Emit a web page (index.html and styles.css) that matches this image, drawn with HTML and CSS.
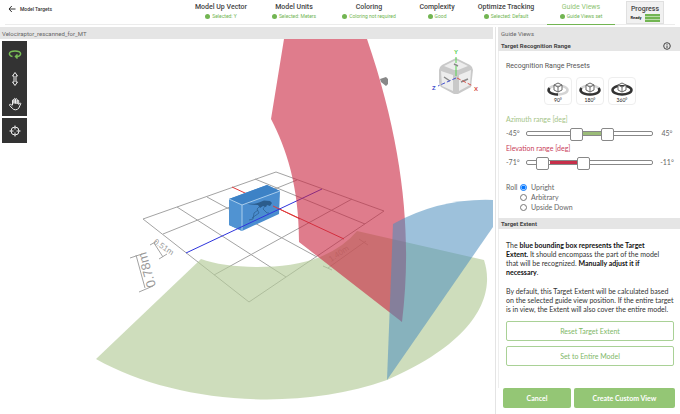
FILE: index.html
```html
<!DOCTYPE html>
<html lang="en">
<head>
<meta charset="utf-8">
<title>Guide Views</title>
<link rel="stylesheet" href="styles.css">
</head>
<body>
<header class="topbar">
  <a class="back" href="#"><svg viewBox="0 0 8 8"><path d="M7.5 4H1M3.8 1 1 4l2.8 3"/></svg>Model Targets</a>
  <nav class="steps">
    <a class="step" href="#"><b>Model Up Vector</b><span>Selected: Y</span></a>
    <a class="step" href="#"><b>Model Units</b><span>Selected: Meters</span></a>
    <a class="step" href="#"><b>Coloring</b><span>Coloring not required</span></a>
    <a class="step" href="#"><b>Complexity</b><span>Good</span></a>
    <a class="step" href="#"><b>Optimize Tracking</b><span>Selected: Default</span></a>
    <a class="step active" href="#"><b>Guide Views</b><span>Guide Views set</span></a>
  </nav>
  <div class="progress"><b>Progress</b><div class="ready"><span>Ready</span><i class="bars"></i></div></div>
</header>
<main class="workspace">
  <section class="viewport">
    <h1 class="bar">Velociraptor_rescanned_for_MT</h1>
    <div class="stage">
      <svg class="scene" viewBox="0 39 493 375" preserveAspectRatio="xMinYMin slice" role="img" aria-label="Model preview">
        <g class="grid">
          <path d="M143 219 276 172 384 211 249 302ZM163 234 297 180M214 275 352 199M177 207 286 277M207 197 317 257M255 179 365 224"/>
          <path d="M130 258 142 254M136 255 145 288M139 292 153 286M150 245 157 241M154 243 163 257M159 259 167 254M328 268 366 241M323 266 332 270M359 239 368 245"/>
        </g>
        <path class="axis-x" d="M232 187 344 239"/>
        <text class="dim" font-size="13" transform="translate(156 286) rotate(-106)">0.78m</text>
        <text class="dim" font-size="8" transform="translate(153 243) rotate(34)">0.51m</text>
        <text class="dim" font-size="8" transform="translate(331 262) rotate(-34)">1.40m</text>
        <path class="box" d="M229 199 267 185 280 191 279 214 242 231 229 225Z"/>
        <path fill="#3d82c6" d="M229 199 267 185 280 191 242 205Z"/>
        <path fill="#5093d2" d="M229 199 242 205V231L229 225Z"/>
        <path class="raptor-body" d="M243 202.500Q254 205 259 202.500L264 200.500 270 201 272 203 270 206 267 205 266 207 263 206 260 208 258 205Q250 205 243 202.500Z"/>
        <path class="raptor" d="M260 206 257 209 259 213 252 218M265 206 263 209 267 213 269 213M258 210 254 213 253 219 249 220"/>
        <path class="edges" d="M229 199 242 205 280 191M242 205V231"/>
        <path class="axis-x" d="M273 206 300 219"/>
        <path class="axis-z" d="M186 253 322 189"/>
        <path class="azimuth" d="M201 259C228 269 285 271 320 257Q344 247 357 231L484 260C494 290 484 338 387 380C290 414 170 401 96 359Z"/>
        <path fill="#888" d="M380 79 386 77 388 79V84L386 86 381 82Z"/>
        <path class="elevation" d="M284 39 271 119C286 148 299 185 299 242L402 322C412 240 405 150 367 39Z"/>
        <path class="roll" d="M393 224Q440 198 493 200V227L387 380Z"/>
        <g class="cube">
          <path fill="#c9c9c9" d="M456 58 470 65Q473 67 473 70L471 87 458 94H454L441 87Q439 85 439 82V70Q439 67 442 65Z"/>
          <path fill="#ededed" d="M456 60 468 66 458 70H454L444 66ZM441 71 453 75V91L442 86ZM459 75 471 70 470 85 459 91Z"/>
          <path fill="none" stroke="#888" stroke-width="1.500" d="M454 64 458 66M444 77 450 81M461 82 468 79"/>
          <path fill="none" stroke="#58d452" d="M456 57V63M456 66V76"/>
          <path fill="none" stroke="#4652cf" stroke-dasharray="4 2" d="M456 78 438 86"/>
          <path fill="none" stroke="#d5554e" stroke-dasharray="4 2" d="M457 78 473 86"/>
          <text x="454" y="54" fill="#58cf50">Y</text><text x="432" y="90" fill="#3e4bcc">Z</text><text x="474" y="91" fill="#d4483f">X</text>
        </g>
      </svg>
      <div class="tools">
        <div class="toolgroup">
          <button class="orbit" aria-label="Orbit"><svg viewBox="0 0 14 14"><path d="M4.500 9.500C0 8.500 0 4 7 4s7 4.500 2.500 5.500M7 9.500h3M9.500 7.500 7.500 9.500l2 2"/></svg></button>
          <button aria-label="Move vertically"><svg viewBox="0 0 14 14"><path d="M7 .5 4.500 4H6v6H4.500L7 13.500 9.500 10H8V4h1.500Z"/></svg></button>
          <button aria-label="Pan"><svg viewBox="0 0 14 14"><path d="M4.500 8V3.200q.8-1.200 1.500 0V6.500M6 6.500V2q.8-1.200 1.500 0v4.500M7.500 6.500V2.200q.8-1.200 1.600 0V7M9.100 7V3.600q.9-1 1.600 0V7.500l.8-1.200q1.200-.8 1.300.4L10.800 11q-1 1.800-3.300 1.800-2 0-3.200-1.500L1.500 8.300q-.2-1.300 1.200-1L4.500 8.800"/></svg></button>
        </div>
        <div class="toolgroup">
          <button aria-label="Center"><svg viewBox="0 0 14 14"><circle cx="7" cy="7" r="4"/><path d="M7 1.500v4M7 8.500v4M1.500 7h4M8.500 7h4"/></svg></button>
        </div>
      </div>
    </div>
  </section>
  <aside class="panel">
    <div class="panelhead"><h2>Guide Views</h2>
      <div class="headrow"><h3>Target Recognition Range</h3><button class="info" aria-label="Info"><svg viewBox="0 0 8 8"><circle cx="4" cy="4" r="3.300"/><path d="M4 3.500V6M4 2v.8"/></svg></button></div>
    </div>
    <div class="range">
      <p class="presetlabel">Recognition Range Presets</p>
      <div class="presets">
        <button><svg viewBox="0 0 24 16"><ellipse class="ring light" cx="12" cy="9" rx="9.500" ry="4.500"/><path class="ring" d="M12 13.500C4 13.500 1 10 3.500 7"/><path class="cubelet" d="M12 2 16 4V9L12 11 8 9V4ZM8 4l4 2 4-2M12 6v5"/></svg><span>90°</span></button>
        <button><svg viewBox="0 0 24 16"><ellipse class="ring light" cx="12" cy="9" rx="9.500" ry="4.500"/><path class="ring" d="M3.500 7C1 10 4 13.500 12 13.500s11-3.500 8.500-6.500"/><path class="cubelet" d="M12 2 16 4V9L12 11 8 9V4ZM8 4l4 2 4-2M12 6v5"/></svg><span>180°</span></button>
        <button><svg viewBox="0 0 24 16"><ellipse class="ring" cx="12" cy="9" rx="9.500" ry="4.500"/><path class="cubelet" d="M12 2 16 4V9L12 11 8 9V4ZM8 4l4 2 4-2M12 6v5"/></svg><span>360°</span></button>
      </div>
      <p class="slabel green">Azimuth range [deg]</p>
      <div class="slider"><output>-45°</output><div class="dual az"><i></i><input type="range" min="0" max="100" value="38" aria-label="Azimuth minimum"><input type="range" min="0" max="100" value="66" aria-label="Azimuth maximum"></div><output class="max">45°</output></div>
      <p class="slabel red">Elevation range [deg]</p>
      <div class="slider"><output>-71°</output><div class="dual el"><i></i><input type="range" min="0" max="100" value="8" aria-label="Elevation minimum"><input type="range" min="0" max="100" value="45" aria-label="Elevation maximum"></div><output class="max">-11°</output></div>
      <div class="roll-row" role="radiogroup" aria-label="Roll"><span>Roll</span><div>
        <label><input type="radio" name="roll" checked>Upright</label>
        <label><input type="radio" name="roll">Arbitrary</label>
        <label><input type="radio" name="roll">Upside Down</label>
      </div></div>
    </div>
    <h3 class="section">Target Extent</h3>
    <div class="extent">
      <p class="lead">The <b>blue bounding box represents the Target Extent.</b> It should encompass the part of the model that will be recognized. <b>Manually adjust it if necessary</b>.</p>
      <p>By default, this Target Extent will be calculated based on the selected guide view position. If the entire target is in view, the Extent will also cover the entire model.</p>
      <button class="outline">Reset Target Extent</button>
      <button class="outline">Set to Entire Model</button>
    </div>
    <footer><button class="solid">Cancel</button><button class="solid wide">Create Custom View</button></footer>
  </aside>
</main>
</body>
</html>
```
FILE: styles.css
```css
* { box-sizing: border-box; }
body { margin: 0; height: 100vh; display: flex; flex-direction: column; background: #fff; color: #444; font: 7px/9px Lato, "Noto Sans", sans-serif; overflow: hidden; }
h1, h2, h3, p { margin: 0; font-size: inherit; }
button { font: inherit; padding: 0; cursor: pointer; }
a { color: inherit; text-decoration: none; }

.topbar { height: 25px; margin: 0 5px 2px; display: flex; border-bottom: 1px solid #ececec; font-family: Roboto, sans-serif; }
.back { display: flex; align-items: center; gap: 4px; width: 178px; padding: 0 0 6px 3px; font-size: 5px; font-weight: 500; color: #333; }
.back svg { width: 8px; height: 8px; fill: none; stroke: #333; stroke-width: 1; }
.steps { display: flex; flex: 1; }
.step { display: flex; flex-direction: column; align-items: center; padding-top: 3px; width: 76px; white-space: nowrap; }
.step:nth-child(2) { width: 70px; }
.step:nth-child(3) { width: 80px; }
.step:nth-child(4) { width: 56px; }
.step:nth-child(5) { width: 82px; }
.step b { font-size: 7px; line-height: 9px; font-weight: 500; }
.step span { display: flex; align-items: center; gap: 2px; font-size: 5px; line-height: 9px; color: #72b552; }
.step span::before { content: ""; width: 5px; height: 5px; border-radius: 50%; background: #72b552; }
.step.active { width: 68px; height: 25px; border-bottom: 1px solid #72b552; }
.step.active b { color: #8fc574; font-weight: 400; }
.progress { width: 38px; height: 23px; margin: 1px 11px 0 0; padding-top: 3px; background: #f1f1f1; border: 1px solid #e0e0e0; text-align: center; }
.progress b { display: block; font-size: 7px; line-height: 8px; font-weight: 500; }
.ready { display: flex; justify-content: center; align-items: center; gap: 3px; font-size: 4px; font-weight: 700; color: #222; }
.bars { width: 15px; height: 8px; background: repeating-linear-gradient(#72b552 0 2px, #b9dca8 2px 3px); }

.workspace { flex: 1; display: flex; min-height: 0; }
.viewport { flex: 0 0 72.5%; min-width: 0; display: flex; flex-direction: column; }
.bar { height: 12px; padding: 0 2px; background: #e5e5e5; font: 400 6px/13px Roboto, sans-serif; color: #666; }
.stage { position: relative; flex: 1; min-height: 0; }
.scene { display: block; width: 100%; height: 100%; }
.grid { fill: none; stroke: #a3a3a3; stroke-width: 1; }
.dim { fill: #999; font-family: "Liberation Sans", sans-serif; }
.axis-x { fill: none; stroke: #e03b3b; stroke-width: 1; }
.axis-z { fill: none; stroke: #2f35dc; stroke-width: 1; }
.box { fill: #4a8dcf; }
.raptor-body { fill: #2b5c8c; }
.raptor { fill: none; stroke: #2b5c8c; stroke-width: 1; stroke-opacity: .7; }
.edges { fill: none; stroke: #a9cdec; stroke-width: 1; }
.azimuth { fill: #b5cb9a; fill-opacity: .66; }
.elevation { fill: #c9253f; fill-opacity: .6; }
.roll { fill: #4c8ebe; fill-opacity: .55; }
.cube text { font: 700 6px "Liberation Sans", sans-serif; }
.tools { position: absolute; left: 2px; top: 2px; display: grid; gap: 2px; }
.toolgroup { width: 25px; background: #333; }
.toolgroup button { display: flex; align-items: center; justify-content: center; width: 25px; height: 25px; border: 0; background: none; }
.toolgroup svg { width: 14px; height: 14px; fill: none; stroke: #eee; stroke-width: 1; }
.toolgroup .orbit svg { stroke: #78bd55; stroke-width: 1.500; }

.panel { flex: 1; min-width: 0; display: flex; flex-direction: column; margin-left: 2px; padding-left: 2px; border-left: 1px solid #e4e4e4; }
.panelhead, .section { background: #e5e5e5; padding-left: 3px; }
.panelhead { font: 6px/12px Roboto, sans-serif; }
.panelhead h2 { font-weight: 400; line-height: 13px; color: #666; }
.headrow { display: flex; align-items: center; justify-content: space-between; height: 11px; padding-right: 9px; }
.headrow h3 { line-height: 11px; font-weight: 700; }
.info { width: 8px; height: 8px; border: 0; background: none; }
.info svg { display: block; width: 8px; height: 8px; fill: none; stroke: #444; stroke-width: 1; }
.range { height: 167px; padding: 11px 6px 0 7px; color: #666; border-left: 1px solid #eee; }
.presetlabel { font-family: Roboto, sans-serif; color: #555; }
.presets { display: flex; justify-content: center; gap: 4px; margin: 6px 0 9px; }
.presets button { width: 28px; height: 28px; border: 1px solid #eee; border-radius: 4px; background: #fff; }
.presets svg { display: block; width: 24px; height: 16px; margin: 1px; }
.presets span { display: block; font-size: 5px; line-height: 5px; color: #222; }
.ring { fill: none; stroke: #333; stroke-width: 2.500; }
.ring.light { stroke: #d4d4d4; }
.cubelet { fill: #fff; stroke: #666; stroke-width: 1; }
.slabel { line-height: 10px; }
.green { color: #a4c487; }
.red { color: #c9405a; }
.slider { display: flex; align-items: center; height: 19px; gap: 7px; }
.slider output { width: 13px; white-space: nowrap; }
.slider .max { width: 14px; text-align: center; }
.dual { position: relative; flex: 1; height: 5px; border: 1px solid #888; border-radius: 2px; background: #fff; }
.dual i { position: absolute; top: 0; bottom: 0; }
.az i { left: 44%; right: 41%; background: #9bbc78; }
.el i { left: 18%; right: 59%; background: #c72f4a; }
.dual input { position: absolute; left: 0; top: -5px; width: 100%; height: 14px; margin: 0; appearance: none; background: none; pointer-events: none; }
.dual input::-webkit-slider-thumb { appearance: none; width: 13px; height: 13px; border: 1px solid #888; border-radius: 2px; background: #fff; pointer-events: auto; }
.roll-row { display: flex; gap: 2px; margin-top: 10px; line-height: 10px; }
.roll-row > span { width: 12px; }
.roll-row label { display: flex; align-items: center; gap: 4px; height: 10px; }
.roll-row input { width: 7px; height: 7px; margin: 0; }
.section { font: 700 6px/11px Roboto, sans-serif; }
.extent { padding: 12px 6px 0 7px; color: #333; border-left: 1px solid #eee; flex: 1; }
.extent p { margin-bottom: 7px; }
.extent .lead { margin-bottom: 10px; padding-right: 10px; }
.extent b { color: #111; }
.outline { display: block; width: 100%; height: 20px; margin-bottom: 5px; border: 1px solid #a9d196; border-radius: 2px; background: #fff; color: #80b868; }
footer { display: flex; gap: 3px; padding: 0 5px 6px; }
.solid { flex: 68; height: 20px; border: 0; border-radius: 2px; background: #94c675; color: #fff; font-weight: 700; }
.solid.wide { flex: 101; }
```
